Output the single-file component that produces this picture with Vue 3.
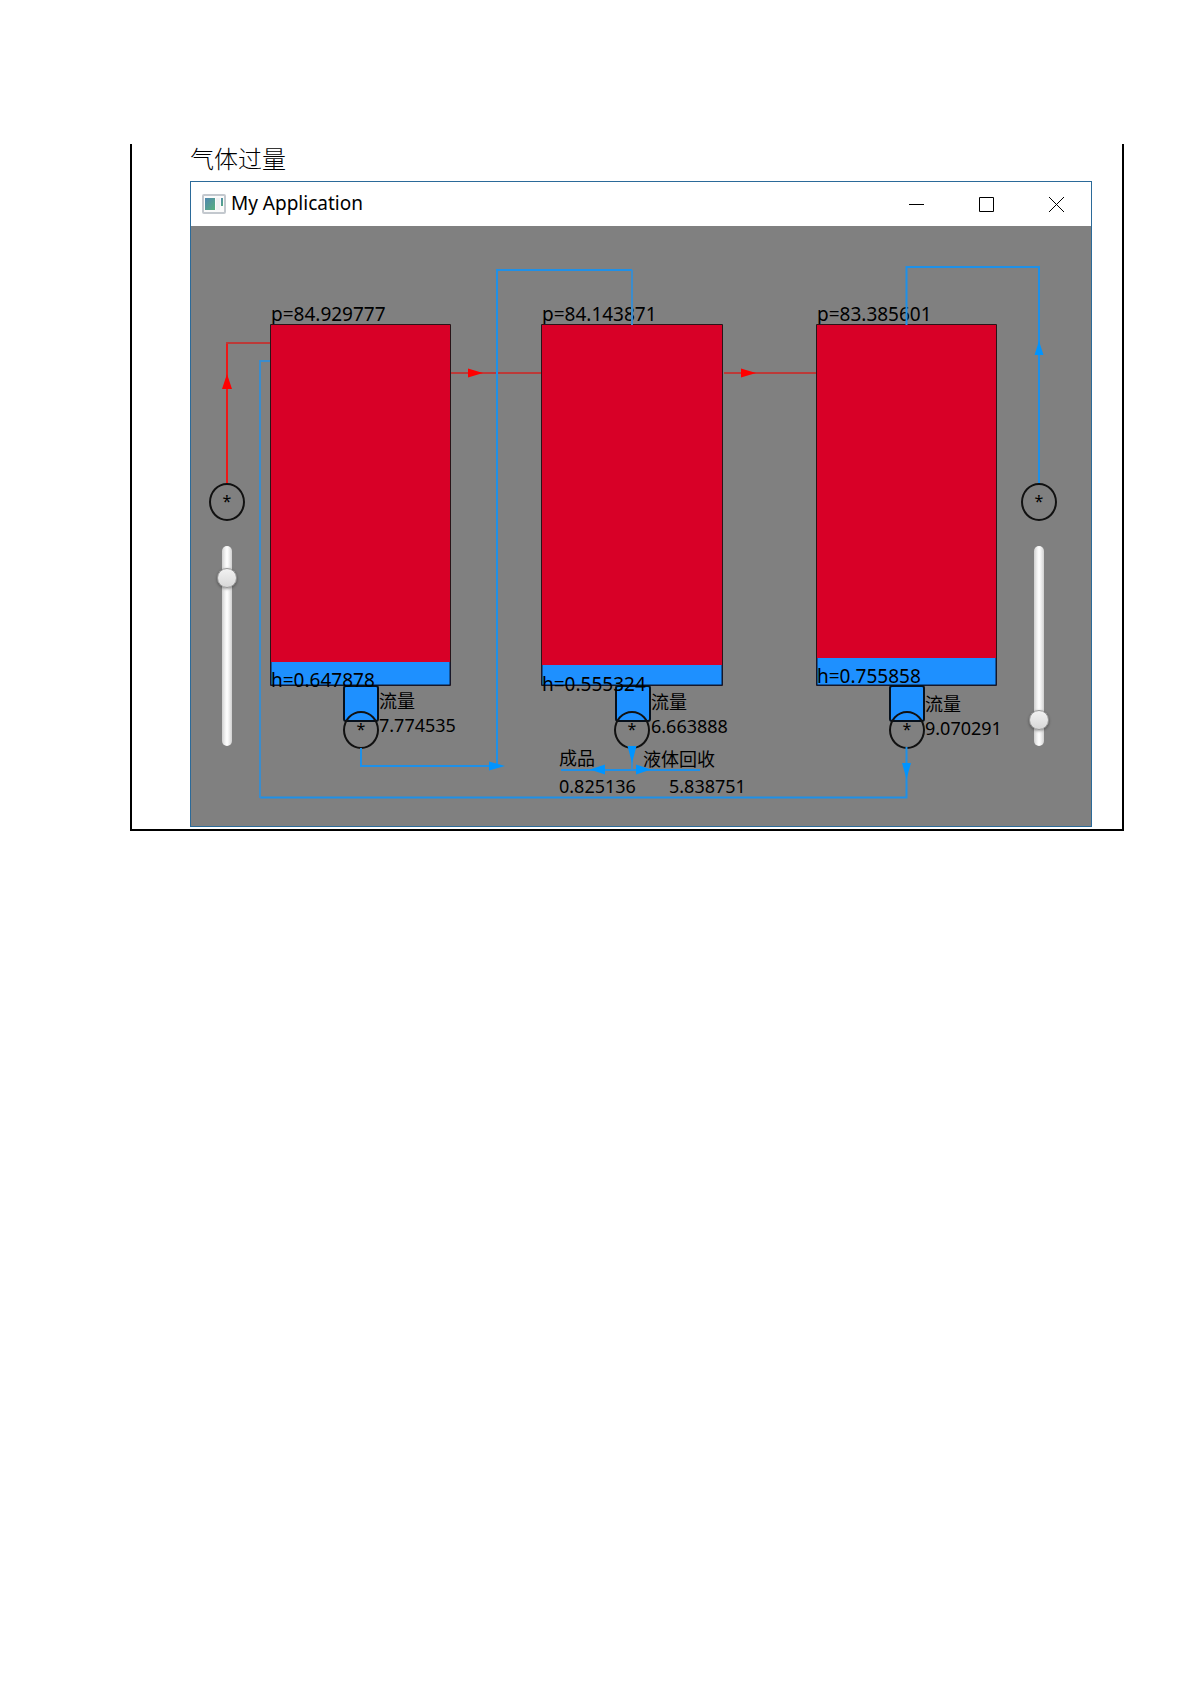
<script setup>
import { ref } from 'vue'

const tanks = [
  { x: 79, width: 180, level: 436, p: '84.929777', h: '0.647878', hy: 461, flow: '7.774535', fy: 506, outlet: 152 },
  { x: 350, width: 181, level: 439, p: '84.143871', h: '0.555324', hy: 465, flow: '6.663888', fy: 507, outlet: 424 },
  { x: 625, width: 180, level: 432, p: '83.385601', h: '0.755858', hy: 457, flow: '9.070291', fy: 509, outlet: 698 },
]

const pumps = [
  { name: '气泵', x: 36, y: 276 },
  { name: '液泵', x: 848, y: 276 },
  { name: '出口泵 1', x: 170, y: 504 },
  { name: '出口泵 2', x: 441, y: 504 },
  { name: '出口泵 3', x: 716, y: 504 },
]

const sliders = ref([
  { name: '气体流量', x: 36, value: 88 },
  { name: '液体流量', x: 848, value: 9 },
])

const place = (x, y) => ({ left: `${x / 9}%`, top: `${y / 6}%` })
</script>

<template>
  <main class="page">
    <section class="frame">
      <h1 class="heading">气体过量</h1>

      <div class="window">
        <header class="titlebar">
          <svg class="app-icon" viewBox="0 0 24 20" aria-hidden="true">
            <defs>
              <linearGradient id="pane" x1="0" y1="0" x2="1" y2="1">
                <stop offset="0" stop-color="#4f86b0" />
                <stop offset="1" stop-color="#58b07c" />
              </linearGradient>
            </defs>
            <rect x="1" y="1" width="22" height="18" rx="1" fill="#fbfbfb" stroke="#c3c8ce" stroke-width="2" />
            <rect x="3" y="4" width="10" height="12" fill="url(#pane)" />
            <rect x="14" y="4" width="4" height="12" fill="#f0f1f2" />
            <rect x="19" y="4" width="2" height="8" fill="url(#pane)" />
          </svg>
          <span class="title">My Application</span>
          <div class="controls">
            <button type="button" aria-label="最小化">
              <svg viewBox="0 0 15 15"><path d="M0 7.5H15" /></svg>
            </button>
            <button type="button" aria-label="最大化">
              <svg viewBox="0 0 15 15"><path d="M.5 .5H14.5V14.5H.5Z" /></svg>
            </button>
            <button type="button" aria-label="关闭">
              <svg viewBox="0 0 15 15"><path d="M0 0L15 15M15 0L0 15" /></svg>
            </button>
          </div>
        </header>

        <div class="scene">
          <svg class="layer" viewBox="0 0 900 600">
            <g v-for="t in tanks" :key="t.x">
              <text class="reading" :x="t.x + 1" y="95">p={{ t.p }}</text>
              <rect class="gas" :x="t.x + 1" y="99" :width="t.width" :height="t.level - 99" />
              <rect class="liquid" :x="t.x + 1" :y="t.level" :width="t.width" :height="459 - t.level" />
              <path class="edge" :d="`M${t.x + 0.5} 98.5h${t.width}v361h-${t.width}z`" />
              <path class="wall" :d="`M${t.x + 1} ${t.level}V459h${t.width - 1}V${t.level}`" />
              <rect class="outlet" :x="t.outlet + 1" y="460" width="34" height="35" rx="2" />
              <text class="reading" :x="t.x + 1" :y="t.hy">h={{ t.h }}</text>
              <text class="label" :x="t.outlet + 36" :y="t.fy - 24">流量</text>
              <text class="label" :x="t.outlet + 36" :y="t.fy">{{ t.flow }}</text>
            </g>
            <text class="label" x="368" y="539">成品</text>
            <text class="label" x="452" y="540">液体回收</text>
            <text class="label" x="368" y="567">0.825136</text>
            <text class="label" x="478" y="567">5.838751</text>
          </svg>

          <button
            v-for="p in pumps"
            :key="p.name"
            type="button"
            class="pump"
            :aria-label="p.name"
            :style="place(p.x, p.y)"
          >*</button>

          <svg class="layer pipes" viewBox="0 0 900 600" aria-hidden="true">
            <g class="red">
              <path d="M36 257V117" />
              <path class="soft" d="M35 117H79M260 147H350M533 147H625" />
              <path class="head" d="M36 148l5 15h-10zM292 147l-15-4.5v9zM565 147l-15-4.5v9z" />
            </g>
            <g class="blue">
              <path d="M170 522V540H310M306 540V44H441" />
              <path d="M69 571.5H715.5V521" />
              <path class="soft" d="M79 135H69V572M441 44V99" />
              <path d="M848 257V41H715.5V99" />
              <path d="M370 544H509" />
              <path class="soft" d="M441 530V544" />
              <path
                class="head"
                d="M314 540l-16-4.5v9zM715.5 553l-4.5-16h9zM848 115l4.5 14h-9zM441 537l-4.5-17h9zM399 543.5l15-5v10zM460 543.5l-15-5v10z"
              />
            </g>
          </svg>

          <input
            v-for="s in sliders"
            :key="s.name"
            v-model="s.value"
            type="range"
            min="0"
            max="100"
            class="slider"
            :aria-label="s.name"
            :style="place(s.x, 420)"
          />
        </div>
      </div>
    </section>
  </main>
</template>

<style>
body {
  margin: 0;
  background: #fff;
}
</style>

<style scoped>
.page {
  padding: 144px 67px 40px 130px;
  color: #000;
  font-family: "Noto Sans", "Noto Sans CJK SC", sans-serif;
}

.frame {
  padding: 0 30px 2px 58px;
  border: 2px solid #000;
  border-top: 0;
}

.heading {
  margin: 0;
  height: 37px;
  font: 300 24px/28px "Noto Sans CJK SC", sans-serif;
}

.window {
  border: 1px solid #2b6a99;
}

.titlebar {
  display: flex;
  align-items: center;
  height: 44px;
  padding-left: 11px;
  background: #fff;
}

.app-icon {
  width: 24px;
  height: 20px;
}

.title {
  margin-left: 5px;
  padding-bottom: 2px;
  font-size: 19px;
  line-height: 24px;
}

.controls {
  display: flex;
  height: 100%;
  margin-left: auto;
}

.controls button {
  display: flex;
  align-items: center;
  justify-content: center;
  width: 70px;
  padding: 0;
  border: 0;
  background: none;
}

.controls svg {
  width: 15px;
  height: 15px;
  fill: none;
  stroke: #000;
}

.scene {
  position: relative;
  aspect-ratio: 3 / 2;
  background: #808080;
}

.layer {
  position: absolute;
  inset: 0;
  width: 100%;
  height: 100%;
}

.reading {
  font-size: 19px;
}

.label {
  font-size: 18px;
}

.gas {
  fill: #d80027;
}

.liquid {
  fill: #1e90ff;
}

.edge {
  fill: none;
  stroke: #2a1418;
}

.wall {
  fill: none;
  stroke: #061a38;
}

.outlet {
  fill: #1e90ff;
  stroke: #06101c;
  stroke-width: 2px;
}

.pipes {
  pointer-events: none;
  fill: none;
  stroke-width: 2px;
}

.red {
  stroke: #ee1818;
}

.red .soft {
  stroke: #bc3a38;
}

.blue {
  stroke: #1e90e8;
}

.blue .soft {
  stroke: #3b8ccc;
}

.red .head {
  fill: #f00;
  stroke: none;
}

.blue .head {
  fill: #0094ff;
  stroke: none;
}

.pump {
  position: absolute;
  display: flex;
  justify-content: center;
  width: 36px;
  height: 38px;
  padding: 4px 0 0;
  border: 2px solid #111;
  border-radius: 50%;
  background: none;
  color: #000;
  font: 16px/24px "Noto Sans", sans-serif;
  transform: translate(-50%, -50%);
}

.slider {
  position: absolute;
  width: 20px;
  height: 200px;
  margin: 0;
  appearance: none;
  background: none;
  writing-mode: vertical-lr;
  direction: rtl;
  transform: translate(-50%, -50%);
}

.slider::-webkit-slider-runnable-track {
  width: 10px;
  height: 200px;
  margin: 0 5px;
  border-radius: 5px;
  background: linear-gradient(90deg, #cfcfcf, #f0f0f0 30%, #fff 50%, #f0f0f0 70%, #cfcfcf);
}

.slider::-webkit-slider-thumb {
  appearance: none;
  width: 20px;
  height: 20px;
  margin-left: -5px;
  border: 1px solid #969696;
  border-radius: 50%;
  background: linear-gradient(#f2f2f2, #d8d8d8);
  box-shadow: 0 1px 3px #0006;
}
</style>
